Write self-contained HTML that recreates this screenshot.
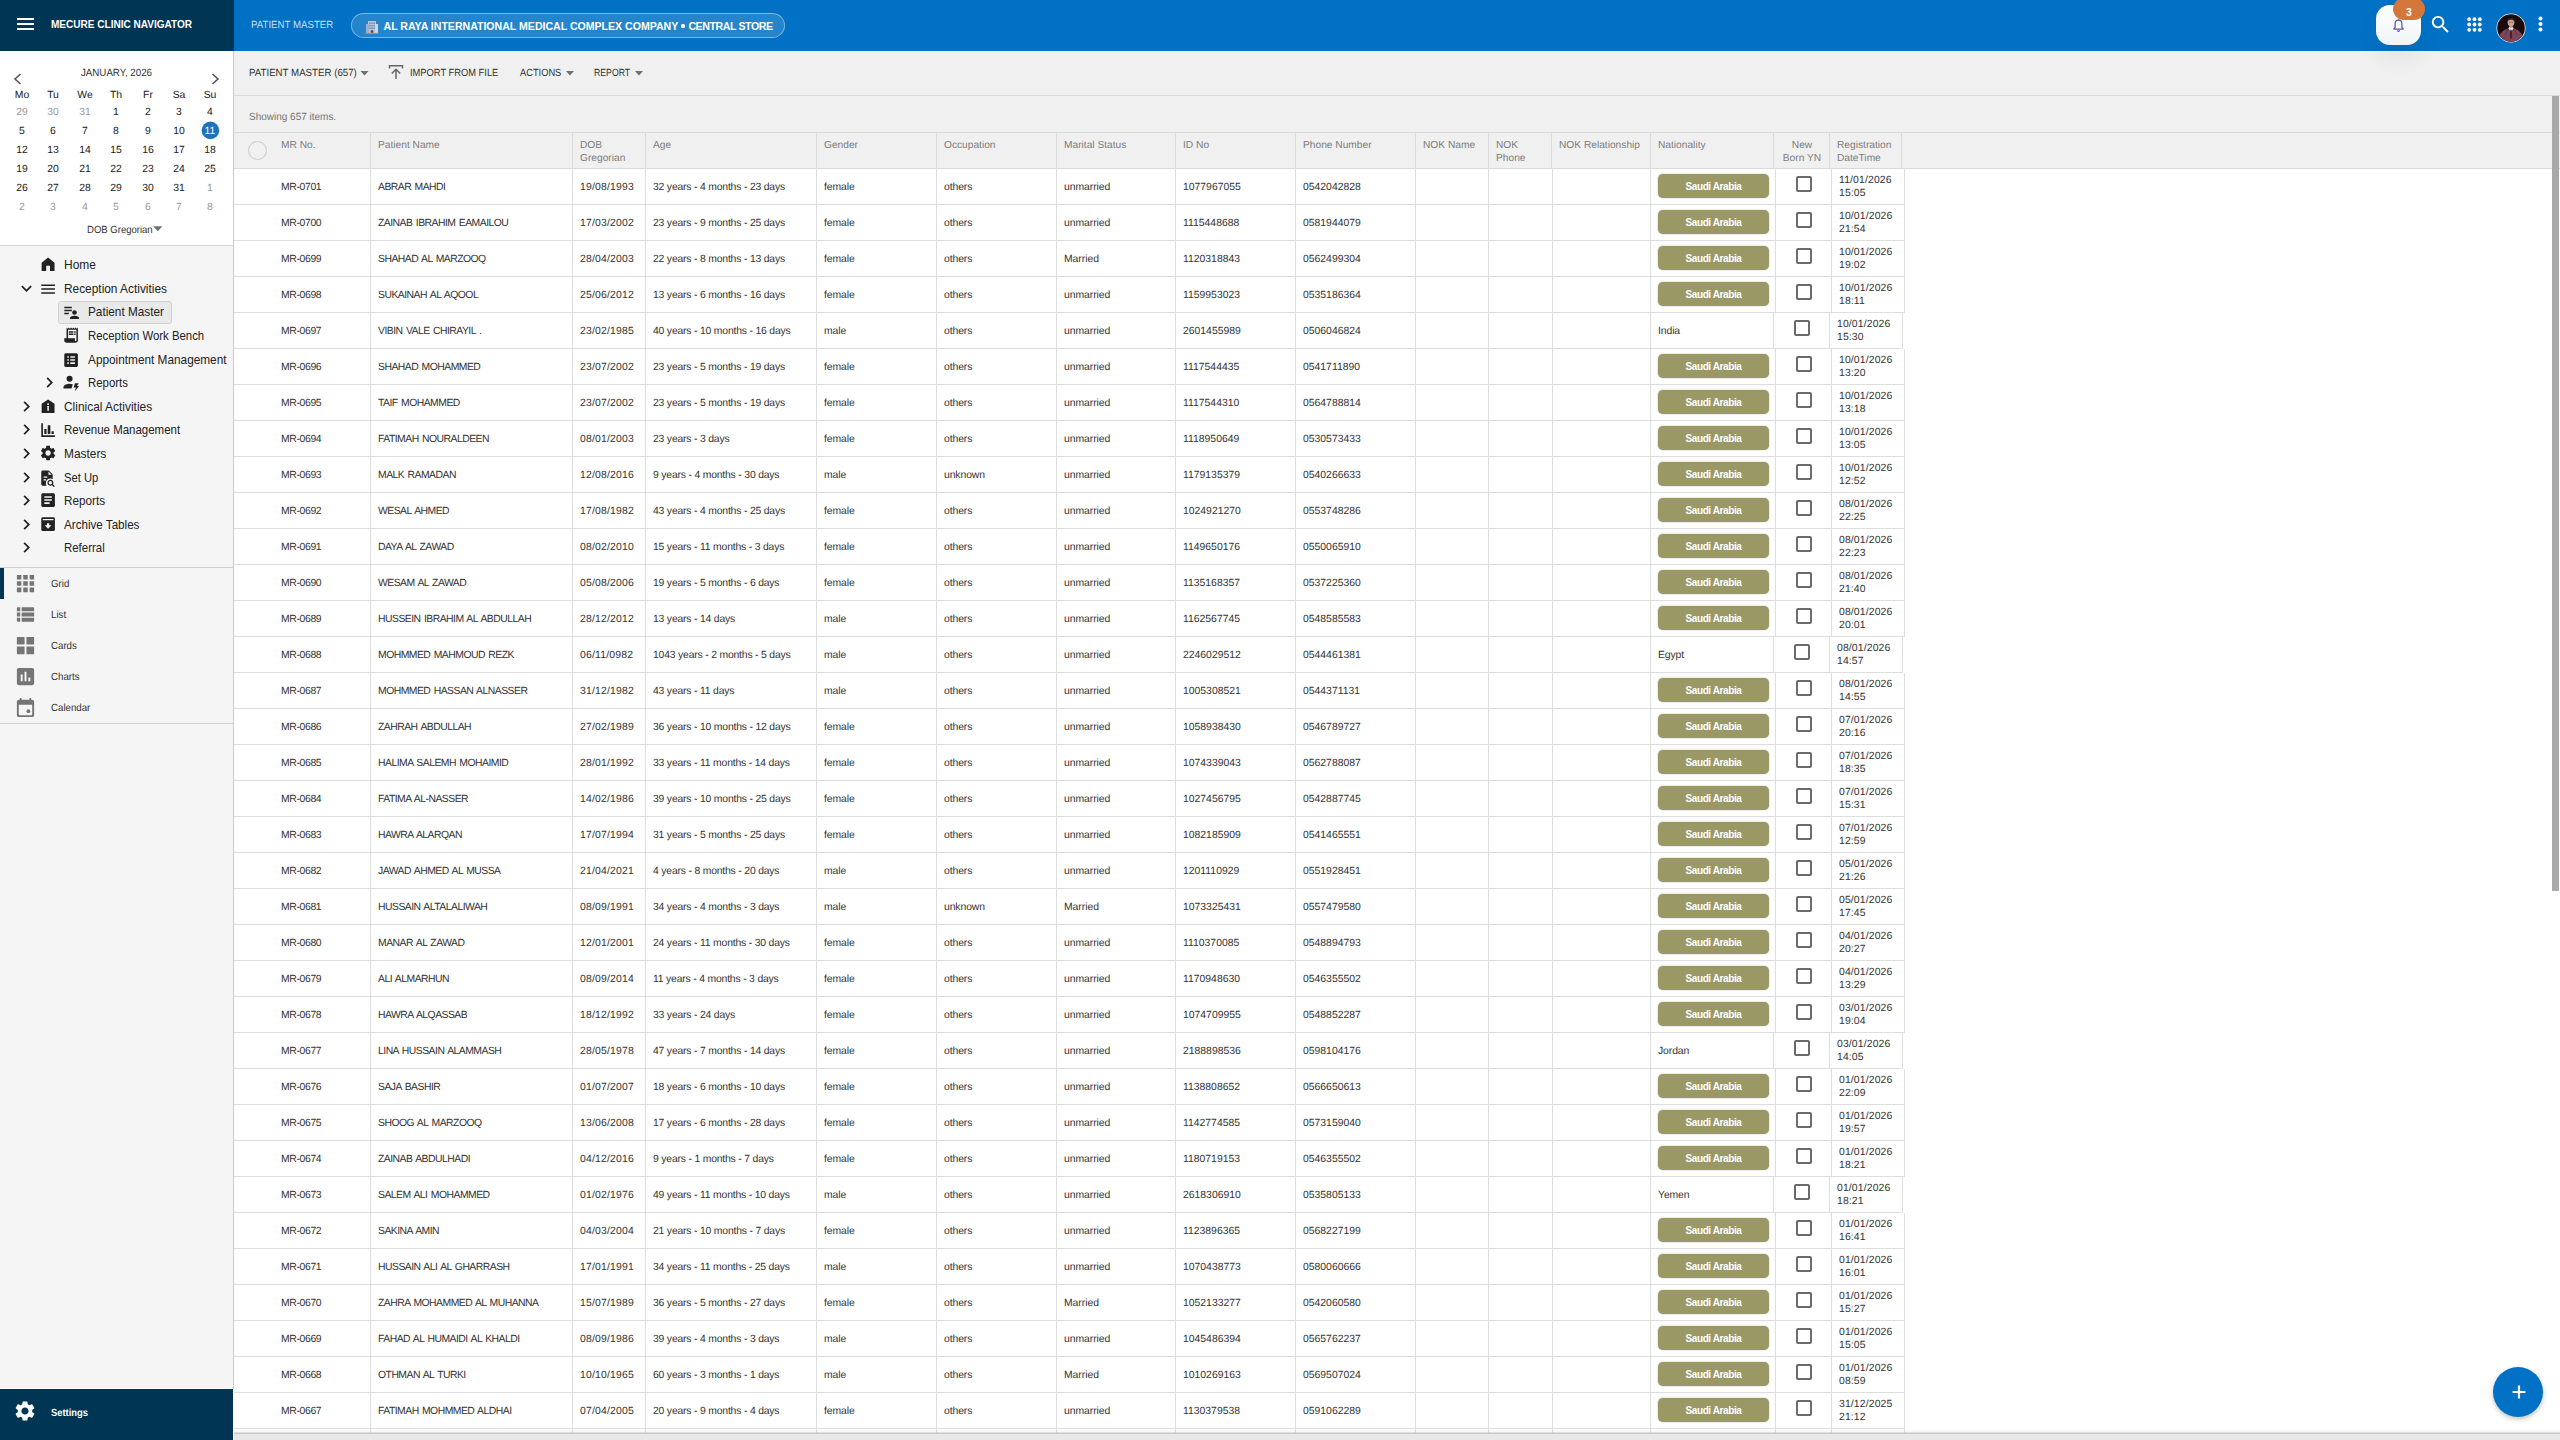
<!DOCTYPE html>
<html lang="en"><head><meta charset="utf-8"><title>Patient Master</title>
<style>
html,body{margin:0;padding:0}
body{width:2560px;height:1440px;overflow:hidden;background:#fff;font-family:"Liberation Sans",sans-serif;font-size:10.4px;color:#333;position:relative}
*,*:before,*:after{box-sizing:border-box}
i{font-style:normal}
svg{display:block}
.abs{position:absolute}
/* ---------- top bar ---------- */
#tdark{position:absolute;left:0;top:0;width:234px;height:51px;background:#003554}
#tblue{position:absolute;left:234px;top:0;width:2326px;height:51px;background:#0071c5}
#burger{position:absolute;left:17px;top:18px;width:17px;height:12px}
#burger b{position:absolute;left:0;width:17px;height:2px;background:#fff}
#brand{position:absolute;left:50.5px;top:14px;height:20px;line-height:20px;font-size:11.2px;font-weight:bold;color:#fff;white-space:nowrap;transform-origin:0 50%;transform:scaleX(.897)}
#ptitle{position:absolute;left:251px;top:15px;height:20px;line-height:20px;font-size:10.4px;color:rgba(255,255,255,.78);white-space:nowrap;transform-origin:0 50%;transform:matrix(.932,0.0005,0,1,0,0)}
#pill{position:absolute;left:351px;top:13px;width:434px;height:25px;border-radius:13px;border:1px solid rgba(255,255,255,.42);background:rgba(255,255,255,.14)}
#pill .t{position:absolute;left:32px;top:2px;height:20px;line-height:20px;font-size:10.6px;font-weight:bold;color:#fff;white-space:nowrap;letter-spacing:-0.1px}
#pill svg{position:absolute;left:13px;top:6px}
#bell{position:absolute;left:2376px;top:5px;width:45px;height:40px;border-radius:14px;background:linear-gradient(180deg,#ffffff,#f1f5f7);box-shadow:0 14px 22px rgba(0,0,0,.055);z-index:5}
#badge{z-index:6;position:absolute;left:2393px;top:-2px;width:32px;height:22px;border-radius:11px;background:#d4773a;color:#fff;font-size:10.5px;font-weight:bold;line-height:22px;text-align:center;padding-top:2.5px}
/* ---------- sidebar ---------- */
#side{position:absolute;left:0;top:51px;width:233px;height:1389px;background:#f5f5f5}
#sideb{position:absolute;left:233px;top:51px;width:1px;height:1338px;background:#cbcbcb}
#cal{position:absolute;left:0;top:0;width:233px;height:195px;background:#fff;border-bottom:1px solid #d4d4d4}
#cal .mt{position:absolute;left:0;width:233px;top:14px;height:15px;line-height:15px;text-align:center;font-size:10.4px;color:#333;transform:matrix(.937,0.0005,0,1,0,0)}
#cal .dn,#cal .dd{position:absolute;width:32px;height:19px;line-height:19px;text-align:center;font-size:10.4px;color:#222;transform:matrix(1,0.0005,0,1,0,0)}
#cal .o{color:#9a9a9a}
#cal .sel{position:absolute;left:0;top:0}
#cal .dobg{position:absolute;left:86.5px;top:171px;height:15px;line-height:15px;font-size:10.4px;color:#333;white-space:nowrap;transform-origin:0 50%;transform:matrix(.917,0.0005,0,1,0,0)}
.nav{position:absolute;left:0;height:24px;line-height:24px;font-size:12.8px;color:#222;white-space:nowrap}
.nav .tx{position:absolute;top:0;display:inline-block;transform-origin:0 50%;transform:scaleX(.92)}
.nav svg{position:absolute}
#pmbox{position:absolute;left:58px;top:250px;width:114px;height:23px;border:1px solid #d2d2d2;background:#e9e9e9;border-radius:3px}
.sep{position:absolute;left:0;width:233px;height:1px;background:#cfcfcf}
.vw{position:absolute;left:0;width:233px;height:31px}
.vw svg{position:absolute;left:13.5px;top:4px}
.vw span{position:absolute;left:50.5px;top:0;height:31px;line-height:31px;font-size:10.4px;color:#333;white-space:nowrap;transform-origin:0 50%;transform:matrix(.933,0.0005,0,1,0,0)}
#gridsel{position:absolute;left:0;top:517px;width:4px;height:31px;background:#003554}
#settings{position:absolute;left:0;top:1337px;width:233px;height:52px;background:#003554;border-top:1px solid #fff}
#settings span{position:absolute;left:50.5px;top:14px;height:20px;line-height:20px;color:#fff;font-size:10.4px;font-weight:bold;transform-origin:0 50%;transform:matrix(.9,0.0005,0,1,0,0)}
#settings svg{position:absolute;left:13.4px;top:10.3px}
/* ---------- main ---------- */
#main{position:absolute;left:0;top:0;width:2560px;height:1440px;pointer-events:none}
#tool{position:absolute;left:234px;top:51px;width:2326px;height:45px;background:#f0f0f0;border-bottom:1px solid #d9d9d9}
.tb{position:absolute;top:63px;height:20px;line-height:20px;font-size:10.4px;color:#333;white-space:nowrap;transform-origin:0 50%}
.tri{position:absolute;width:9px;height:5px;background:#707070;clip-path:polygon(0 0,100% 0,50% 100%)}
#showing{position:absolute;left:234px;top:96px;width:2326px;height:36px;background:#f0f0f0}
#showing span{position:absolute;left:14.5px;top:11px;height:20px;line-height:20px;font-size:10.4px;color:#757575;white-space:nowrap;transform-origin:0 50%;transform:matrix(.961,0.0005,0,1,0,0)}
#thead{position:absolute;left:0;top:132px;width:2560px;height:37px}
#thead:before{content:"";position:absolute;left:234px;top:0;width:2326px;height:37px;background:#f0f0f0;border-top:1px solid #dadada;border-bottom:1px solid #dadada}
.th{position:absolute;top:6px;line-height:13px;font-size:10.2px;color:#7d7d7d;white-space:nowrap;transform-origin:0 0;transform:matrix(1,0.0005,0,1,0,0)}
.thc{text-align:center;transform-origin:50% 0}
.selc{position:absolute;left:248px;top:9px;width:19px;height:19px;border-radius:50%;border:1px solid #c9c9c9}
.vl{position:absolute;top:1px;width:1px;height:36px;background:#dcdcdc}
#tbody{position:absolute;left:0;top:0;width:2560px;height:1433px;overflow:hidden}
#tbody .vl{top:169px;height:1264px;background:#dedede}
.tr{position:absolute;left:234px;width:1669px;height:36px;border-bottom:1px solid #dedede}
.tr.sa{width:1671px}
.c{position:absolute;top:0;height:35px;line-height:35px;white-space:nowrap;color:#333;transform-origin:0 50%;transform:matrix(1,0.0005,0,1,0,0)}
.mr{left:47px;letter-spacing:-0.36px}
.nm{left:143.7px;letter-spacing:-0.52px;word-spacing:1px}
.dob{left:346px;letter-spacing:0.2px}
.age{left:419px;letter-spacing:-0.19px}
.gen{left:590px;letter-spacing:-0.1px}
.occ{left:710px;letter-spacing:-0.1px}
.mar{left:830px;letter-spacing:-0.05px}
.idn{left:949px}
.ph{left:1069px}
.nat{left:1424px;letter-spacing:-0.1px}
.reg{left:1603px;top:4px;line-height:13px;height:26px;letter-spacing:0.14px;transform-origin:0 0}
.sa .reg{left:1605px}
.badge{position:absolute;left:1424px;top:5px;width:111px;height:24px;border-radius:5px;background:#9a9965;color:#fff;font-weight:bold;font-size:10px;line-height:24px;padding-top:1px;text-align:center;letter-spacing:-0.4px;box-shadow:0 0 1.5px rgba(0,0,0,.4)}
.cb{position:absolute;left:1559.5px;top:7px;width:16px;height:16px;border:2px solid #6b6b6b;border-radius:2px;background:#fff}
.sa .cb{left:1562px}
.v{position:absolute;top:0;width:1px;height:36px;background:#dedede}
.v.a{left:1539px}.v.b{left:1595px}.v.d{left:1668px}
.sa .v.a{left:1541px}.sa .v.b{left:1597px}.sa .v.d{left:1670px}
.tr.last{border-bottom:0}
#vscroll{position:absolute;left:2552px;top:96px;width:7px;height:795px;background:#a9a9a9}
#hbar{position:absolute;left:234px;top:1429px;width:2326px;height:11px;background:linear-gradient(180deg,rgba(255,255,255,0) 0,rgba(0,0,0,.04) 3px,#c9c9c9 4px,#c9c9c9 5px,#e8e8e8 5px,#e8e8e8 11px)}
#fab{position:absolute;left:2493px;top:1367px;width:50px;height:50px;border-radius:50%;background:#0071c5;box-shadow:0 2px 5px rgba(0,0,0,.25)}
#fab svg{position:absolute;left:14.5px;top:13.5px}

</style></head>
<body>
<div id="tdark">
<div id="burger"><b style="top:0"></b><b style="top:5px"></b><b style="top:10px"></b></div>
<div id="brand">MECURE CLINIC NAVIGATOR</div>
</div>
<div id="tblue">
</div>
<div id="ptitle">PATIENT MASTER</div>
<div id="pill">
<svg width="14" height="14" viewBox="0 0 14 14"><rect x="3" y="1" width="8" height="12" fill="#b8c4d6"/><rect x="1" y="4" width="3" height="9" fill="#9fb0c8"/><rect x="10" y="4" width="3" height="9" fill="#cfd8e6"/><g fill="#5f86c2"><rect x="4.2" y="2.5" width="1.4" height="1.4"/><rect x="6.3" y="2.5" width="1.4" height="1.4"/><rect x="8.4" y="2.5" width="1.4" height="1.4"/><rect x="4.2" y="5" width="1.4" height="1.4"/><rect x="6.3" y="5" width="1.4" height="1.4"/><rect x="8.4" y="5" width="1.4" height="1.4"/><rect x="4.2" y="7.5" width="1.4" height="1.4"/><rect x="6.3" y="7.5" width="1.4" height="1.4"/><rect x="8.4" y="7.5" width="1.4" height="1.4"/></g><rect x="5.8" y="10.3" width="2.4" height="2.7" fill="#4a3f6b"/><rect x="0.5" y="12.6" width="13" height="1" fill="#c9a27a"/></svg>
<span class="t" style="left:31.500px;letter-spacing:-0.02px">AL RAYA INTERNATIONAL MEDICAL COMPLEX COMPANY</span><i style="position:absolute;left:329px;top:10.200px;width:4px;height:4px;border-radius:1.500px;background:#fff"></i><span class="t" style="left:336.400px;letter-spacing:-0.42px">CENTRAL STORE</span>
</div>
<div id="bell"><svg style="position:absolute;left:16px;top:13.500px" width="13" height="14" viewBox="0 0 13 14"><path d="M6.5 1.2 C4.3 1.2 3.1 2.9 3.1 5 V8.4 L1.8 10 H11.2 L9.9 8.4 V5 C9.9 2.9 8.7 1.2 6.5 1.2 Z" fill="none" stroke="#5a59b0" stroke-width="1.250" stroke-linejoin="round"/><path d="M5.5 11.3 a1 1 0 0 0 2 0" fill="none" stroke="#5a59b0" stroke-width="1.250"/><circle cx="6.5" cy="0.9" r="0.7" fill="#5a59b0"/></svg></div>
<div id="badge">3</div>
<svg class="abs" style="left:2428.900px;top:12.850px" width="23" height="23" viewBox="0 0 24 24"><path fill="#fff" d="M15.5 14h-.79l-.28-.27C15.41 12.59 16 11.11 16 9.5 16 5.91 13.09 3 9.5 3S3 5.910 3 9.500 5.910 16 9.500 16c1.610 0 3.090-.59 4.230-1.570l.27.28v.79l5 4.990L20.490 19l-4.990-5zm-6 0C7.010 14 5 11.990 5 9.500S7.010 5 9.500 5 14 7.010 14 9.500 11.990 14 9.500 14z"/></svg>
<svg class="abs" style="left:2466px;top:16px" width="17" height="17" viewBox="0 0 17 17"><g fill="#fff"><circle cx="3.2" cy="3.2" r="1.9"/><circle cx="8.5" cy="3.2" r="1.9"/><circle cx="13.8" cy="3.2" r="1.9"/><circle cx="3.2" cy="8.5" r="1.9"/><circle cx="8.5" cy="8.5" r="1.9"/><circle cx="13.8" cy="8.5" r="1.9"/><circle cx="3.2" cy="13.8" r="1.9"/><circle cx="8.5" cy="13.8" r="1.9"/><circle cx="13.8" cy="13.8" r="1.9"/></g></svg>
<svg class="abs" style="left:2496px;top:12.500px" width="30" height="30" viewBox="0 0 30 30"><defs><clipPath id="avc"><circle cx="15" cy="15" r="13.800"/></clipPath></defs><circle cx="15" cy="15" r="14.600" fill="#eadfe4"/><circle cx="15" cy="15" r="13.800" fill="#1c0b0d"/><g clip-path="url(#avc)"><path d="M2 30C2 21 7 17 11.500 15.500L15 19l3.500-3.500C23 17 28 21 28 30z" fill="#7d4459"/><path d="M9 22l2.500-5.500M21 22l-2.500-5.500" stroke="#5d2f42" stroke-width=".8" fill="none"/><path d="M12.300 15.200L15 19.500l2.700-4.300-1.200-1.700h-3z" fill="#e6e2e8"/><path d="M14.300 16.800h1.400l.5 7.200L15 26.500 13.800 24z" fill="#3a2530"/><rect x="13.600" y="11.500" width="2.800" height="3.200" fill="#b98d80"/><ellipse cx="15" cy="9.300" rx="3.400" ry="4.100" fill="#c9a193"/><path d="M11.500 8.800C10.800 3.300 19.200 3.300 18.500 8.800 17.500 6.200 12.500 6.200 11.500 8.800z" fill="#2b1d1d"/><path d="M12.600 9.300h2M15.400 9.300h2" stroke="#5a4038" stroke-width=".5"/></g></svg>
<svg class="abs" style="left:2538px;top:16px" width="5" height="16" viewBox="0 0 5 16"><g fill="#fff"><circle cx="2.500" cy="2.500" r="2"/><circle cx="2.500" cy="8" r="2"/><circle cx="2.500" cy="13.500" r="2"/></g></svg>
<div id="side">
<div id="cal">
<div class="mt">JANUARY, 2026</div>
<svg class="abs" style="left:13px;top:22px" width="9" height="12" viewBox="0 0 9 12"><path d="M7.5 1 L2 6 L7.5 11" fill="none" stroke="#555" stroke-width="1.6"/></svg>
<svg class="abs" style="left:211px;top:22px" width="9" height="12" viewBox="0 0 9 12"><path d="M1.5 1 L7 6 L1.5 11" fill="none" stroke="#555" stroke-width="1.6"/></svg>
<span class="dn" style="left:5.8px;top:34px">Mo</span><span class="dn" style="left:37.2px;top:34px">Tu</span><span class="dn" style="left:68.7px;top:34px">We</span><span class="dn" style="left:100.1px;top:34px">Th</span><span class="dn" style="left:131.5px;top:34px">Fr</span><span class="dn" style="left:163.0px;top:34px">Sa</span><span class="dn" style="left:194.4px;top:34px">Su</span>
<svg class="sel" width="233" height="100" viewBox="0 0 233 100"><circle cx="210.400" cy="79.400" r="8.800" fill="#1e73be"/></svg>
<span class="dd o" style="left:5.8px;top:51px">29</span><span class="dd o" style="left:37.2px;top:51px">30</span><span class="dd o" style="left:68.7px;top:51px">31</span><span class="dd" style="left:100.1px;top:51px">1</span><span class="dd" style="left:131.5px;top:51px">2</span><span class="dd" style="left:163.0px;top:51px">3</span><span class="dd" style="left:194.4px;top:51px">4</span>
<span class="dd" style="left:5.8px;top:70px">5</span><span class="dd" style="left:37.2px;top:70px">6</span><span class="dd" style="left:68.7px;top:70px">7</span><span class="dd" style="left:100.1px;top:70px">8</span><span class="dd" style="left:131.5px;top:70px">9</span><span class="dd" style="left:163.0px;top:70px">10</span><span class="dd" style="left:194.4px;top:70px;color:#fff">11</span>
<span class="dd" style="left:5.8px;top:89px">12</span><span class="dd" style="left:37.2px;top:89px">13</span><span class="dd" style="left:68.7px;top:89px">14</span><span class="dd" style="left:100.1px;top:89px">15</span><span class="dd" style="left:131.5px;top:89px">16</span><span class="dd" style="left:163.0px;top:89px">17</span><span class="dd" style="left:194.4px;top:89px">18</span>
<span class="dd" style="left:5.8px;top:108px">19</span><span class="dd" style="left:37.2px;top:108px">20</span><span class="dd" style="left:68.7px;top:108px">21</span><span class="dd" style="left:100.1px;top:108px">22</span><span class="dd" style="left:131.5px;top:108px">23</span><span class="dd" style="left:163.0px;top:108px">24</span><span class="dd" style="left:194.4px;top:108px">25</span>
<span class="dd" style="left:5.8px;top:127px">26</span><span class="dd" style="left:37.2px;top:127px">27</span><span class="dd" style="left:68.7px;top:127px">28</span><span class="dd" style="left:100.1px;top:127px">29</span><span class="dd" style="left:131.5px;top:127px">30</span><span class="dd" style="left:163.0px;top:127px">31</span><span class="dd o" style="left:194.4px;top:127px">1</span>
<span class="dd o" style="left:5.8px;top:146px">2</span><span class="dd o" style="left:37.2px;top:146px">3</span><span class="dd o" style="left:68.7px;top:146px">4</span><span class="dd o" style="left:100.1px;top:146px">5</span><span class="dd o" style="left:131.5px;top:146px">6</span><span class="dd o" style="left:163.0px;top:146px">7</span><span class="dd o" style="left:194.4px;top:146px">8</span>
<span class="dobg">DOB Gregorian</span><i class="tri" style="left:153.300px;top:175.200px"></i>
</div>
<div id="pmbox"></div>
<div class="nav" style="top:201.6px"><svg style="left:38.9px;top:2.9px" width="18.2" height="18.2" viewBox="0 0 24 24" fill="#222"><path d="M12 3.200 3.500 10.200V21h6v-6.800h5V21h6V10.200z"/></svg><span class="tx" style="left:64.2px;transform:scaleX(0.934)">Home</span></div>
<div class="nav" style="top:225.7px"><svg style="left:15.8px;top:1.5px" width="21.0" height="21.0" viewBox="0 0 24 24" fill="#222"><path d="M16.590 8.590L12 13.170 7.410 8.590 6 10l6 6 6-6z"/></svg><svg style="left:38.9px;top:2.9px" width="18.2" height="18.2" viewBox="0 0 24 24" fill="#222"><path d="M3 18h18v-2H3v2zm0-5h18v-2H3v2zm0-7v2h18V6H3z"/></svg><span class="tx" style="left:64.2px;transform:scaleX(0.928)">Reception Activities</span></div>
<div class="nav" style="top:248.8px"><svg style="left:62.4px;top:2.9px" width="18.2" height="18.2" viewBox="0 0 24 24" fill="#222"><path d="M3 5h10v2H3zM3 9h10v2H3zM3 13h6v2H3z"/><circle cx="16.5" cy="12.500" r="3"/><path d="M10.500 21v-1.200c0-2 4-3.100 6-3.100s6 1.100 6 3.100V21z"/></svg><span class="tx" style="left:87.6px;transform:scaleX(0.920)">Patient Master</span></div>
<div class="nav" style="top:272.6px"><svg style="left:62.4px;top:2.9px" width="18.2" height="18.2" viewBox="0 0 24 24" fill="#222"><path d="M19.500 3.500L18 2l-1.500 1.500L15 2l-1.500 1.500L12 2l-1.500 1.500L9 2 7.500 3.500 6 2v14H3v3c0 1.660 1.340 3 3 3h12c1.660 0 3-1.340 3-3V2l-1.500 1.500zM19 19c0 .55-.45 1-1 1s-1-.45-1-1v-3H8V5h11v14z"/><path d="M9 7h6v2H9zM16 7h2v2h-2zM9 10h6v2H9zM16 10h2v2h-2z"/></svg><span class="tx" style="left:87.6px;transform:scaleX(0.889)">Reception Work Bench</span></div>
<div class="nav" style="top:296.7px"><svg style="left:62.4px;top:2.9px" width="18.2" height="18.2" viewBox="0 0 24 24" fill="#222"><path d="M19 3H5c-1.100 0-2 .9-2 2v14c0 1.100.9 2 2 2h14c1.100 0 2-.9 2-2V5c0-1.100-.9-2-2-2zM9 17H7v-2h2v2zm0-4H7v-2h2v2zm0-4H7V7h2v2zm8 8h-6v-2h6v2zm0-4h-6v-2h6v2zm0-4h-6V7h6v2z"/></svg><span class="tx" style="left:87.6px;transform:scaleX(0.923)">Appointment Management</span></div>
<div class="nav" style="top:319.6px"><svg style="left:38.8px;top:1.5px" width="21.0" height="21.0" viewBox="0 0 24 24" fill="#222"><path d="M10 6L8.590 7.410 13.170 12l-4.580 4.590L10 18l6-6z"/></svg><svg style="left:62.4px;top:2.9px" width="18.2" height="18.2" viewBox="0 0 24 24" fill="#222"><circle cx="10" cy="7.500" r="4"/><path d="M2 20.500v-2.200c0-2.800 5.300-4.200 8-4.200 1.200 0 2.800.3 4.300.8l-1.800 5.600z"/><path d="M17 13.500h5l-2.200 3.800h2.700l-5.500 6.700 1.300-5h-2.800z"/></svg><span class="tx" style="left:87.6px;transform:scaleX(0.890)">Reports</span></div>
<div class="nav" style="top:343.6px"><svg style="left:15.8px;top:1.5px" width="21.0" height="21.0" viewBox="0 0 24 24" fill="#222"><path d="M10 6L8.590 7.410 13.170 12l-4.580 4.590L10 18l6-6z"/></svg><svg style="left:38.9px;top:2.9px" width="18.2" height="18.2" viewBox="0 0 24 24" fill="#222"><path d="M12 3.200 3.500 8.800V21h17V8.800z"/><path fill="#f5f5f5" d="M11 8.300h2v2.200h-2zM11 12h2v6h-2z"/></svg><span class="tx" style="left:64.2px;transform:scaleX(0.932)">Clinical Activities</span></div>
<div class="nav" style="top:366.8px"><svg style="left:15.8px;top:1.5px" width="21.0" height="21.0" viewBox="0 0 24 24" fill="#222"><path d="M10 6L8.590 7.410 13.170 12l-4.580 4.590L10 18l6-6z"/></svg><svg style="left:38.9px;top:2.9px" width="18.2" height="18.2" viewBox="0 0 24 24" fill="#222"><path d="M3 3h2.200v15.800H21V21H3z"/><path d="M7 10.500h3V17H7zM11.500 5.500h3.500V17h-3.500zM16.500 13.500h3V17h-3z"/></svg><span class="tx" style="left:64.2px;transform:scaleX(0.897)">Revenue Management</span></div>
<div class="nav" style="top:390.6px"><svg style="left:15.8px;top:1.5px" width="21.0" height="21.0" viewBox="0 0 24 24" fill="#222"><path d="M10 6L8.590 7.410 13.170 12l-4.580 4.590L10 18l6-6z"/></svg><svg style="left:38.9px;top:2.9px" width="18.2" height="18.2" viewBox="0 0 24 24" fill="#222"><path d="M19.140 12.940c.04-.3.06-.61.06-.94 0-.32-.02-.64-.07-.94l2.030-1.580c.18-.14.23-.41.12-.61l-1.920-3.320c-.12-.22-.37-.29-.59-.22l-2.390.96c-.5-.38-1.030-.7-1.620-.94l-.36-2.540c-.04-.24-.24-.41-.48-.41h-3.840c-.24 0-.43.17-.47.41l-.36 2.540c-.59.24-1.130.57-1.620.94l-2.390-.96c-.22-.08-.47 0-.59.22L2.740 8.870c-.12.210-.08.470.12.610l2.030 1.580c-.05.3-.09.63-.09.940s.02.640.07.940l-2.030 1.580c-.18.140-.23.410-.12.610l1.920 3.320c.12.220.37.290.59.220l2.390-.96c.5.380 1.030.7 1.620.94l.36 2.540c.05.240.24.410.48.410h3.840c.24 0 .44-.17.470-.41l.36-2.540c.59-.24 1.130-.56 1.620-.94l2.390.96c.22.080.47 0 .59-.22l1.920-3.320c.12-.22.07-.47-.12-.61l-2.010-1.580zM12 15.600c-1.980 0-3.600-1.620-3.600-3.600s1.620-3.600 3.600-3.600 3.600 1.620 3.600 3.600-1.620 3.600-3.600 3.600z"/></svg><span class="tx" style="left:64.2px;transform:scaleX(0.930)">Masters</span></div>
<div class="nav" style="top:414.7px"><svg style="left:15.8px;top:1.5px" width="21.0" height="21.0" viewBox="0 0 24 24" fill="#222"><path d="M10 6L8.590 7.410 13.170 12l-4.580 4.590L10 18l6-6z"/></svg><svg style="left:38.9px;top:2.9px" width="18.2" height="18.2" viewBox="0 0 24 24" fill="#222"><path d="M5 2h8l5 5v6.300c-.9-.5-1.900-.8-3-.8-3.300 0-6 2.700-6 6 0 1.300.4 2.500 1.100 3.500H5c-1.100 0-2-.9-2-2V4c0-1.100.9-2 2-2z"/><path fill="#f5f5f5" d="M12.500 3.200V7.500h4.300zM6 10h5v1.600H6zM6 13.500h3.500v1.600H6z"/><path d="M15 14.200a3.900 3.900 0 1 0 2.100 7.200l2.500 2.500 1.300-1.300-2.500-2.500A3.900 3.900 0 0 0 15 14.200zm0 1.700a2.200 2.200 0 1 1 0 4.400 2.200 2.200 0 0 1 0-4.400z"/></svg><span class="tx" style="left:64.2px;transform:scaleX(0.878)">Set Up</span></div>
<div class="nav" style="top:437.6px"><svg style="left:15.8px;top:1.5px" width="21.0" height="21.0" viewBox="0 0 24 24" fill="#222"><path d="M10 6L8.590 7.410 13.170 12l-4.580 4.590L10 18l6-6z"/></svg><svg style="left:38.9px;top:2.9px" width="18.2" height="18.2" viewBox="0 0 24 24" fill="#222"><path d="M19 3H5c-1.100 0-2 .9-2 2v14c0 1.100.9 2 2 2h14c1.100 0 2-.9 2-2V5c0-1.100-.9-2-2-2zm-5 14H7v-2h7v2zm3-4H7v-2h10v2zm0-4H7V7h10v2z"/></svg><span class="tx" style="left:64.2px;transform:scaleX(0.915)">Reports</span></div>
<div class="nav" style="top:461.6px"><svg style="left:15.8px;top:1.5px" width="21.0" height="21.0" viewBox="0 0 24 24" fill="#222"><path d="M10 6L8.590 7.410 13.170 12l-4.580 4.590L10 18l6-6z"/></svg><svg style="left:38.9px;top:2.9px" width="18.2" height="18.2" viewBox="0 0 24 24" fill="#222"><path d="M5 3h14c1.100 0 2 .9 2 2v14c0 1.100-.9 2-2 2H5c-1.100 0-2-.9-2-2V5c0-1.100.9-2 2-2z"/><path fill="#f5f5f5" d="M5 5.200h14v1.600H5zM12 18l-4.500-4.500H10.500v-2.500h3v2.500h3z"/></svg><span class="tx" style="left:64.2px;transform:scaleX(0.909)">Archive Tables</span></div>
<div class="nav" style="top:484.7px"><svg style="left:15.8px;top:1.5px" width="21.0" height="21.0" viewBox="0 0 24 24" fill="#222"><path d="M10 6L8.590 7.410 13.170 12l-4.580 4.590L10 18l6-6z"/></svg><span class="tx" style="left:64.2px;transform:scaleX(0.894)">Referral</span></div>
<div class="sep" style="top:516px"></div>
<div id="gridsel"></div>
<div class="vw" style="top:516.5px"><svg width="23" height="23" viewBox="0 0 24 24" fill="#757575"><path d="M3 3h4.700v4.700H3zM9.650 3h4.700v4.700H9.650zM16.300 3H21v4.700h-4.700zM3 9.650h4.700v4.700H3zM9.650 9.650h4.700v4.700H9.650zM16.300 9.650H21v4.700h-4.700zM3 16.300h4.700V21H3zM9.650 16.300h4.700V21H9.650zM16.300 16.300H21V21h-4.700z"/></svg><span>Grid</span></div>
<div class="vw" style="top:547.5px"><svg width="23" height="23" viewBox="0 0 24 24" fill="#757575"><path d="M3 5.500c0-.55.45-1 1-1h2.500v4H3zM3 10h3.500v4H3zM3 15.500h3.500v4H4c-.55 0-1-.45-1-1zM8 4.500h12c.55 0 1 .45 1 1v3H8zM8 10h13v4H8zM8 15.500h13v3c0 .55-.45 1-1 1H8z"/></svg><span>List</span></div>
<div class="vw" style="top:578.5px"><svg width="23" height="23" viewBox="0 0 24 24" fill="#757575"><path d="M3 3h8v8H3zM13 3h8v8h-8zM3 13h8v8H3zM13 13h8v8h-8z"/></svg><span>Cards</span></div>
<div class="vw" style="top:609.5px"><svg width="23" height="23" viewBox="0 0 24 24" fill="#757575"><path d="M19 3H5c-1.100 0-2 .9-2 2v14c0 1.100.9 2 2 2h14c1.100 0 2-.9 2-2V5c0-1.100-.9-2-2-2zM9 17H7v-7h2v7zm4 0h-2V7h2v10zm4 0h-2v-4h2v4z"/></svg><span>Charts</span></div>
<div class="vw" style="top:640.5px"><svg width="23" height="23" viewBox="0 0 24 24" fill="#757575"><circle cx="15" cy="15.800" r="2"/><path d="M16 3v1H8V3c0-.55-.45-1-1-1s-1 .45-1 1v1H5c-1.110 0-1.990.9-1.990 2L3 20c0 1.100.89 2 2 2h14c1.100 0 2-.9 2-2V6c0-1.100-.9-2-2-2h-1V3c0-.55-.45-1-1-1s-1 .45-1 1zm2 17H6c-.55 0-1-.45-1-1V9h14v10c0 .55-.45 1-1 1z"/></svg><span>Calendar</span></div>
<div class="sep" style="top:672px"></div>
<div id="settings"><svg width="24" height="24" viewBox="0 0 24 24" fill="#fff"><path d="M19.140 12.940c.04-.3.06-.61.06-.94 0-.32-.02-.64-.07-.94l2.030-1.580c.18-.14.23-.41.12-.61l-1.920-3.320c-.12-.22-.37-.29-.59-.22l-2.390.96c-.5-.38-1.030-.7-1.620-.94l-.36-2.540c-.04-.24-.24-.41-.48-.41h-3.840c-.24 0-.43.17-.47.41l-.36 2.540c-.59.24-1.130.57-1.620.94l-2.390-.96c-.22-.08-.47 0-.59.22L2.740 8.870c-.12.210-.08.470.12.610l2.030 1.580c-.05.3-.09.63-.09.940s.02.640.07.940l-2.030 1.580c-.18.140-.23.410-.12.610l1.920 3.320c.12.220.37.290.59.220l2.390-.96c.5.380 1.030.7 1.620.94l.36 2.540c.05.240.24.410.48.410h3.840c.24 0 .44-.17.470-.41l.36-2.540c.59-.24 1.130-.56 1.620-.94l2.390.96c.22.080.47 0 .59-.22l1.920-3.320c.12-.22.07-.47-.12-.61l-2.010-1.580zM12 15.600c-1.980 0-3.600-1.620-3.600-3.600s1.620-3.600 3.600-3.600 3.600 1.620 3.600 3.600-1.620 3.600-3.600 3.600z"/></svg><span>Settings</span></div>
</div>
<div id="sideb"></div>
<div id="main">
<div id="tool"></div>
<span class="tb" style="left:248.500px;transform:matrix(.934,0.0005,0,1,0,0)">PATIENT MASTER (657)</span><i class="tri" style="left:360px;top:70.5px"></i>
<svg class="abs" style="left:388px;top:64px" width="16" height="16" viewBox="0 0 16 16" fill="none" stroke="#666" stroke-width="1.500"><path d="M1.500 4.500V1.800H14.500V4.500"/><path d="M8 15V5.500M3.800 9.500L8 5.300L12.200 9.500"/></svg>
<span class="tb" style="left:410.300px;transform:matrix(.898,0.0005,0,1,0,0)">IMPORT FROM FILE</span>
<span class="tb" style="left:520px;transform:matrix(.894,0.0005,0,1,0,0)">ACTIONS</span><i class="tri" style="left:565.500px;top:70.5px"></i>
<span class="tb" style="left:593.600px;transform:matrix(.839,0.0005,0,1,0,0)">REPORT</span><i class="tri" style="left:634.500px;top:70.5px"></i>
<div id="showing"><span>Showing 657 items.</span></div>
<div id="thead">
<span class="selc"></span>
<span class="th" style="left:281px">MR No.</span>
<span class="th" style="left:378px">Patient Name</span>
<span class="th" style="left:580px">DOB<br>Gregorian</span>
<span class="th" style="left:653px">Age</span>
<span class="th" style="left:824px">Gender</span>
<span class="th" style="left:944px">Occupation</span>
<span class="th" style="left:1064px">Marital Status</span>
<span class="th" style="left:1183px">ID No</span>
<span class="th" style="left:1303px">Phone Number</span>
<span class="th" style="left:1423px">NOK Name</span>
<span class="th" style="left:1496px">NOK<br>Phone</span>
<span class="th" style="left:1559px">NOK Relationship</span>
<span class="th" style="left:1658px">Nationality</span>
<span class="th thc" style="left:1774px;width:56px">New<br>Born YN</span>
<span class="th" style="left:1837px">Registration<br>DateTime</span>
<i class="vl" style="left:370px"></i><i class="vl" style="left:572px"></i><i class="vl" style="left:645px"></i><i class="vl" style="left:816px"></i><i class="vl" style="left:936px"></i><i class="vl" style="left:1056px"></i><i class="vl" style="left:1175px"></i><i class="vl" style="left:1295px"></i><i class="vl" style="left:1415px"></i><i class="vl" style="left:1488px"></i><i class="vl" style="left:1551px"></i><i class="vl" style="left:1650px"></i><i class="vl" style="left:1773px"></i><i class="vl" style="left:1829px"></i><i class="vl" style="left:1901px"></i>
</div>
<div id="tbody">
<div class="tr sa" style="top:169px"><span class="c mr">MR-0701</span><span class="c nm">ABRAR MAHDI</span><span class="c dob">19/08/1993</span><span class="c age">32 years - 4 months - 23 days</span><span class="c gen">female</span><span class="c occ">others</span><span class="c mar">unmarried</span><span class="c idn">1077967055</span><span class="c ph">0542042828</span><span class="badge">Saudi Arabia</span><span class="cb"></span><span class="c reg">11/01/2026<br>15:05</span><i class="v a"></i><i class="v b"></i><i class="v d"></i></div>
<div class="tr sa" style="top:205px"><span class="c mr">MR-0700</span><span class="c nm">ZAINAB IBRAHIM EAMAILOU</span><span class="c dob">17/03/2002</span><span class="c age">23 years - 9 months - 25 days</span><span class="c gen">female</span><span class="c occ">others</span><span class="c mar">unmarried</span><span class="c idn">1115448688</span><span class="c ph">0581944079</span><span class="badge">Saudi Arabia</span><span class="cb"></span><span class="c reg">10/01/2026<br>21:54</span><i class="v a"></i><i class="v b"></i><i class="v d"></i></div>
<div class="tr sa" style="top:241px"><span class="c mr">MR-0699</span><span class="c nm">SHAHAD AL MARZOOQ</span><span class="c dob">28/04/2003</span><span class="c age">22 years - 8 months - 13 days</span><span class="c gen">female</span><span class="c occ">others</span><span class="c mar">Married</span><span class="c idn">1120318843</span><span class="c ph">0562499304</span><span class="badge">Saudi Arabia</span><span class="cb"></span><span class="c reg">10/01/2026<br>19:02</span><i class="v a"></i><i class="v b"></i><i class="v d"></i></div>
<div class="tr sa" style="top:277px"><span class="c mr">MR-0698</span><span class="c nm">SUKAINAH AL AQOOL</span><span class="c dob">25/06/2012</span><span class="c age">13 years - 6 months - 16 days</span><span class="c gen">female</span><span class="c occ">others</span><span class="c mar">unmarried</span><span class="c idn">1159953023</span><span class="c ph">0535186364</span><span class="badge">Saudi Arabia</span><span class="cb"></span><span class="c reg">10/01/2026<br>18:11</span><i class="v a"></i><i class="v b"></i><i class="v d"></i></div>
<div class="tr" style="top:313px"><span class="c mr">MR-0697</span><span class="c nm">VIBIN VALE CHIRAYIL .</span><span class="c dob">23/02/1985</span><span class="c age">40 years - 10 months - 16 days</span><span class="c gen">male</span><span class="c occ">others</span><span class="c mar">unmarried</span><span class="c idn">2601455989</span><span class="c ph">0506046824</span><span class="c nat">India</span><span class="cb"></span><span class="c reg">10/01/2026<br>15:30</span><i class="v a"></i><i class="v b"></i><i class="v d"></i></div>
<div class="tr sa" style="top:349px"><span class="c mr">MR-0696</span><span class="c nm">SHAHAD MOHAMMED</span><span class="c dob">23/07/2002</span><span class="c age">23 years - 5 months - 19 days</span><span class="c gen">female</span><span class="c occ">others</span><span class="c mar">unmarried</span><span class="c idn">1117544435</span><span class="c ph">0541711890</span><span class="badge">Saudi Arabia</span><span class="cb"></span><span class="c reg">10/01/2026<br>13:20</span><i class="v a"></i><i class="v b"></i><i class="v d"></i></div>
<div class="tr sa" style="top:385px"><span class="c mr">MR-0695</span><span class="c nm">TAIF MOHAMMED</span><span class="c dob">23/07/2002</span><span class="c age">23 years - 5 months - 19 days</span><span class="c gen">female</span><span class="c occ">others</span><span class="c mar">unmarried</span><span class="c idn">1117544310</span><span class="c ph">0564788814</span><span class="badge">Saudi Arabia</span><span class="cb"></span><span class="c reg">10/01/2026<br>13:18</span><i class="v a"></i><i class="v b"></i><i class="v d"></i></div>
<div class="tr sa" style="top:421px"><span class="c mr">MR-0694</span><span class="c nm">FATIMAH NOURALDEEN</span><span class="c dob">08/01/2003</span><span class="c age">23 years - 3 days</span><span class="c gen">female</span><span class="c occ">others</span><span class="c mar">unmarried</span><span class="c idn">1118950649</span><span class="c ph">0530573433</span><span class="badge">Saudi Arabia</span><span class="cb"></span><span class="c reg">10/01/2026<br>13:05</span><i class="v a"></i><i class="v b"></i><i class="v d"></i></div>
<div class="tr sa" style="top:457px"><span class="c mr">MR-0693</span><span class="c nm">MALK RAMADAN</span><span class="c dob">12/08/2016</span><span class="c age">9 years - 4 months - 30 days</span><span class="c gen">male</span><span class="c occ">unknown</span><span class="c mar">unmarried</span><span class="c idn">1179135379</span><span class="c ph">0540266633</span><span class="badge">Saudi Arabia</span><span class="cb"></span><span class="c reg">10/01/2026<br>12:52</span><i class="v a"></i><i class="v b"></i><i class="v d"></i></div>
<div class="tr sa" style="top:493px"><span class="c mr">MR-0692</span><span class="c nm">WESAL AHMED</span><span class="c dob">17/08/1982</span><span class="c age">43 years - 4 months - 25 days</span><span class="c gen">female</span><span class="c occ">others</span><span class="c mar">unmarried</span><span class="c idn">1024921270</span><span class="c ph">0553748286</span><span class="badge">Saudi Arabia</span><span class="cb"></span><span class="c reg">08/01/2026<br>22:25</span><i class="v a"></i><i class="v b"></i><i class="v d"></i></div>
<div class="tr sa" style="top:529px"><span class="c mr">MR-0691</span><span class="c nm">DAYA AL ZAWAD</span><span class="c dob">08/02/2010</span><span class="c age">15 years - 11 months - 3 days</span><span class="c gen">female</span><span class="c occ">others</span><span class="c mar">unmarried</span><span class="c idn">1149650176</span><span class="c ph">0550065910</span><span class="badge">Saudi Arabia</span><span class="cb"></span><span class="c reg">08/01/2026<br>22:23</span><i class="v a"></i><i class="v b"></i><i class="v d"></i></div>
<div class="tr sa" style="top:565px"><span class="c mr">MR-0690</span><span class="c nm">WESAM AL ZAWAD</span><span class="c dob">05/08/2006</span><span class="c age">19 years - 5 months - 6 days</span><span class="c gen">female</span><span class="c occ">others</span><span class="c mar">unmarried</span><span class="c idn">1135168357</span><span class="c ph">0537225360</span><span class="badge">Saudi Arabia</span><span class="cb"></span><span class="c reg">08/01/2026<br>21:40</span><i class="v a"></i><i class="v b"></i><i class="v d"></i></div>
<div class="tr sa" style="top:601px"><span class="c mr">MR-0689</span><span class="c nm">HUSSEIN IBRAHIM AL ABDULLAH</span><span class="c dob">28/12/2012</span><span class="c age">13 years - 14 days</span><span class="c gen">male</span><span class="c occ">others</span><span class="c mar">unmarried</span><span class="c idn">1162567745</span><span class="c ph">0548585583</span><span class="badge">Saudi Arabia</span><span class="cb"></span><span class="c reg">08/01/2026<br>20:01</span><i class="v a"></i><i class="v b"></i><i class="v d"></i></div>
<div class="tr" style="top:637px"><span class="c mr">MR-0688</span><span class="c nm">MOHMMED MAHMOUD REZK</span><span class="c dob">06/11/0982</span><span class="c age">1043 years - 2 months - 5 days</span><span class="c gen">male</span><span class="c occ">others</span><span class="c mar">unmarried</span><span class="c idn">2246029512</span><span class="c ph">0544461381</span><span class="c nat">Egypt</span><span class="cb"></span><span class="c reg">08/01/2026<br>14:57</span><i class="v a"></i><i class="v b"></i><i class="v d"></i></div>
<div class="tr sa" style="top:673px"><span class="c mr">MR-0687</span><span class="c nm">MOHMMED HASSAN ALNASSER</span><span class="c dob">31/12/1982</span><span class="c age">43 years - 11 days</span><span class="c gen">male</span><span class="c occ">others</span><span class="c mar">unmarried</span><span class="c idn">1005308521</span><span class="c ph">0544371131</span><span class="badge">Saudi Arabia</span><span class="cb"></span><span class="c reg">08/01/2026<br>14:55</span><i class="v a"></i><i class="v b"></i><i class="v d"></i></div>
<div class="tr sa" style="top:709px"><span class="c mr">MR-0686</span><span class="c nm">ZAHRAH ABDULLAH</span><span class="c dob">27/02/1989</span><span class="c age">36 years - 10 months - 12 days</span><span class="c gen">female</span><span class="c occ">others</span><span class="c mar">unmarried</span><span class="c idn">1058938430</span><span class="c ph">0546789727</span><span class="badge">Saudi Arabia</span><span class="cb"></span><span class="c reg">07/01/2026<br>20:16</span><i class="v a"></i><i class="v b"></i><i class="v d"></i></div>
<div class="tr sa" style="top:745px"><span class="c mr">MR-0685</span><span class="c nm">HALIMA SALEMH MOHAIMID</span><span class="c dob">28/01/1992</span><span class="c age">33 years - 11 months - 14 days</span><span class="c gen">female</span><span class="c occ">others</span><span class="c mar">unmarried</span><span class="c idn">1074339043</span><span class="c ph">0562788087</span><span class="badge">Saudi Arabia</span><span class="cb"></span><span class="c reg">07/01/2026<br>18:35</span><i class="v a"></i><i class="v b"></i><i class="v d"></i></div>
<div class="tr sa" style="top:781px"><span class="c mr">MR-0684</span><span class="c nm">FATIMA AL-NASSER</span><span class="c dob">14/02/1986</span><span class="c age">39 years - 10 months - 25 days</span><span class="c gen">female</span><span class="c occ">others</span><span class="c mar">unmarried</span><span class="c idn">1027456795</span><span class="c ph">0542887745</span><span class="badge">Saudi Arabia</span><span class="cb"></span><span class="c reg">07/01/2026<br>15:31</span><i class="v a"></i><i class="v b"></i><i class="v d"></i></div>
<div class="tr sa" style="top:817px"><span class="c mr">MR-0683</span><span class="c nm">HAWRA ALARQAN</span><span class="c dob">17/07/1994</span><span class="c age">31 years - 5 months - 25 days</span><span class="c gen">female</span><span class="c occ">others</span><span class="c mar">unmarried</span><span class="c idn">1082185909</span><span class="c ph">0541465551</span><span class="badge">Saudi Arabia</span><span class="cb"></span><span class="c reg">07/01/2026<br>12:59</span><i class="v a"></i><i class="v b"></i><i class="v d"></i></div>
<div class="tr sa" style="top:853px"><span class="c mr">MR-0682</span><span class="c nm">JAWAD AHMED AL MUSSA</span><span class="c dob">21/04/2021</span><span class="c age">4 years - 8 months - 20 days</span><span class="c gen">male</span><span class="c occ">others</span><span class="c mar">unmarried</span><span class="c idn">1201110929</span><span class="c ph">0551928451</span><span class="badge">Saudi Arabia</span><span class="cb"></span><span class="c reg">05/01/2026<br>21:26</span><i class="v a"></i><i class="v b"></i><i class="v d"></i></div>
<div class="tr sa" style="top:889px"><span class="c mr">MR-0681</span><span class="c nm">HUSSAIN ALTALALIWAH</span><span class="c dob">08/09/1991</span><span class="c age">34 years - 4 months - 3 days</span><span class="c gen">male</span><span class="c occ">unknown</span><span class="c mar">Married</span><span class="c idn">1073325431</span><span class="c ph">0557479580</span><span class="badge">Saudi Arabia</span><span class="cb"></span><span class="c reg">05/01/2026<br>17:45</span><i class="v a"></i><i class="v b"></i><i class="v d"></i></div>
<div class="tr sa" style="top:925px"><span class="c mr">MR-0680</span><span class="c nm">MANAR AL ZAWAD</span><span class="c dob">12/01/2001</span><span class="c age">24 years - 11 months - 30 days</span><span class="c gen">female</span><span class="c occ">others</span><span class="c mar">unmarried</span><span class="c idn">1110370085</span><span class="c ph">0548894793</span><span class="badge">Saudi Arabia</span><span class="cb"></span><span class="c reg">04/01/2026<br>20:27</span><i class="v a"></i><i class="v b"></i><i class="v d"></i></div>
<div class="tr sa" style="top:961px"><span class="c mr">MR-0679</span><span class="c nm">ALI ALMARHUN</span><span class="c dob">08/09/2014</span><span class="c age">11 years - 4 months - 3 days</span><span class="c gen">female</span><span class="c occ">others</span><span class="c mar">unmarried</span><span class="c idn">1170948630</span><span class="c ph">0546355502</span><span class="badge">Saudi Arabia</span><span class="cb"></span><span class="c reg">04/01/2026<br>13:29</span><i class="v a"></i><i class="v b"></i><i class="v d"></i></div>
<div class="tr sa" style="top:997px"><span class="c mr">MR-0678</span><span class="c nm">HAWRA ALQASSAB</span><span class="c dob">18/12/1992</span><span class="c age">33 years - 24 days</span><span class="c gen">female</span><span class="c occ">others</span><span class="c mar">unmarried</span><span class="c idn">1074709955</span><span class="c ph">0548852287</span><span class="badge">Saudi Arabia</span><span class="cb"></span><span class="c reg">03/01/2026<br>19:04</span><i class="v a"></i><i class="v b"></i><i class="v d"></i></div>
<div class="tr" style="top:1033px"><span class="c mr">MR-0677</span><span class="c nm">LINA HUSSAIN ALAMMASH</span><span class="c dob">28/05/1978</span><span class="c age">47 years - 7 months - 14 days</span><span class="c gen">female</span><span class="c occ">others</span><span class="c mar">unmarried</span><span class="c idn">2188898536</span><span class="c ph">0598104176</span><span class="c nat">Jordan</span><span class="cb"></span><span class="c reg">03/01/2026<br>14:05</span><i class="v a"></i><i class="v b"></i><i class="v d"></i></div>
<div class="tr sa" style="top:1069px"><span class="c mr">MR-0676</span><span class="c nm">SAJA BASHIR</span><span class="c dob">01/07/2007</span><span class="c age">18 years - 6 months - 10 days</span><span class="c gen">female</span><span class="c occ">others</span><span class="c mar">unmarried</span><span class="c idn">1138808652</span><span class="c ph">0566650613</span><span class="badge">Saudi Arabia</span><span class="cb"></span><span class="c reg">01/01/2026<br>22:09</span><i class="v a"></i><i class="v b"></i><i class="v d"></i></div>
<div class="tr sa" style="top:1105px"><span class="c mr">MR-0675</span><span class="c nm">SHOOG AL MARZOOQ</span><span class="c dob">13/06/2008</span><span class="c age">17 years - 6 months - 28 days</span><span class="c gen">female</span><span class="c occ">others</span><span class="c mar">unmarried</span><span class="c idn">1142774585</span><span class="c ph">0573159040</span><span class="badge">Saudi Arabia</span><span class="cb"></span><span class="c reg">01/01/2026<br>19:57</span><i class="v a"></i><i class="v b"></i><i class="v d"></i></div>
<div class="tr sa" style="top:1141px"><span class="c mr">MR-0674</span><span class="c nm">ZAINAB ABDULHADI</span><span class="c dob">04/12/2016</span><span class="c age">9 years - 1 months - 7 days</span><span class="c gen">female</span><span class="c occ">others</span><span class="c mar">unmarried</span><span class="c idn">1180719153</span><span class="c ph">0546355502</span><span class="badge">Saudi Arabia</span><span class="cb"></span><span class="c reg">01/01/2026<br>18:21</span><i class="v a"></i><i class="v b"></i><i class="v d"></i></div>
<div class="tr" style="top:1177px"><span class="c mr">MR-0673</span><span class="c nm">SALEM ALI MOHAMMED</span><span class="c dob">01/02/1976</span><span class="c age">49 years - 11 months - 10 days</span><span class="c gen">male</span><span class="c occ">others</span><span class="c mar">unmarried</span><span class="c idn">2618306910</span><span class="c ph">0535805133</span><span class="c nat">Yemen</span><span class="cb"></span><span class="c reg">01/01/2026<br>18:21</span><i class="v a"></i><i class="v b"></i><i class="v d"></i></div>
<div class="tr sa" style="top:1213px"><span class="c mr">MR-0672</span><span class="c nm">SAKINA AMIN</span><span class="c dob">04/03/2004</span><span class="c age">21 years - 10 months - 7 days</span><span class="c gen">female</span><span class="c occ">others</span><span class="c mar">unmarried</span><span class="c idn">1123896365</span><span class="c ph">0568227199</span><span class="badge">Saudi Arabia</span><span class="cb"></span><span class="c reg">01/01/2026<br>16:41</span><i class="v a"></i><i class="v b"></i><i class="v d"></i></div>
<div class="tr sa" style="top:1249px"><span class="c mr">MR-0671</span><span class="c nm">HUSSAIN ALI AL GHARRASH</span><span class="c dob">17/01/1991</span><span class="c age">34 years - 11 months - 25 days</span><span class="c gen">male</span><span class="c occ">others</span><span class="c mar">unmarried</span><span class="c idn">1070438773</span><span class="c ph">0580060666</span><span class="badge">Saudi Arabia</span><span class="cb"></span><span class="c reg">01/01/2026<br>16:01</span><i class="v a"></i><i class="v b"></i><i class="v d"></i></div>
<div class="tr sa" style="top:1285px"><span class="c mr">MR-0670</span><span class="c nm">ZAHRA MOHAMMED AL MUHANNA</span><span class="c dob">15/07/1989</span><span class="c age">36 years - 5 months - 27 days</span><span class="c gen">female</span><span class="c occ">others</span><span class="c mar">Married</span><span class="c idn">1052133277</span><span class="c ph">0542060580</span><span class="badge">Saudi Arabia</span><span class="cb"></span><span class="c reg">01/01/2026<br>15:27</span><i class="v a"></i><i class="v b"></i><i class="v d"></i></div>
<div class="tr sa" style="top:1321px"><span class="c mr">MR-0669</span><span class="c nm">FAHAD AL HUMAIDI AL KHALDI</span><span class="c dob">08/09/1986</span><span class="c age">39 years - 4 months - 3 days</span><span class="c gen">male</span><span class="c occ">others</span><span class="c mar">unmarried</span><span class="c idn">1045486394</span><span class="c ph">0565762237</span><span class="badge">Saudi Arabia</span><span class="cb"></span><span class="c reg">01/01/2026<br>15:05</span><i class="v a"></i><i class="v b"></i><i class="v d"></i></div>
<div class="tr sa" style="top:1357px"><span class="c mr">MR-0668</span><span class="c nm">OTHMAN AL TURKI</span><span class="c dob">10/10/1965</span><span class="c age">60 years - 3 months - 1 days</span><span class="c gen">male</span><span class="c occ">others</span><span class="c mar">Married</span><span class="c idn">1010269163</span><span class="c ph">0569507024</span><span class="badge">Saudi Arabia</span><span class="cb"></span><span class="c reg">01/01/2026<br>08:59</span><i class="v a"></i><i class="v b"></i><i class="v d"></i></div>
<div class="tr sa" style="top:1393px"><span class="c mr">MR-0667</span><span class="c nm">FATIMAH MOHMMED ALDHAI</span><span class="c dob">07/04/2005</span><span class="c age">20 years - 9 months - 4 days</span><span class="c gen">female</span><span class="c occ">others</span><span class="c mar">unmarried</span><span class="c idn">1130379538</span><span class="c ph">0591062289</span><span class="badge">Saudi Arabia</span><span class="cb"></span><span class="c reg">31/12/2025<br>21:12</span><i class="v a"></i><i class="v b"></i><i class="v d"></i></div>
<div class="tr sa last" style="top:1429px"><i class="v a"></i><i class="v b"></i><i class="v d"></i></div>
<i class="vl" style="left:370px"></i><i class="vl" style="left:572px"></i><i class="vl" style="left:645px"></i><i class="vl" style="left:816px"></i><i class="vl" style="left:936px"></i><i class="vl" style="left:1056px"></i><i class="vl" style="left:1175px"></i><i class="vl" style="left:1295px"></i><i class="vl" style="left:1415px"></i><i class="vl" style="left:1488px"></i><i class="vl" style="left:1552px"></i><i class="vl" style="left:1650px"></i>
</div>
<div id="vscroll"></div>
<div id="hbar"></div>
<div id="fab"><svg viewBox="0 0 24 24" width="22" height="22"><path fill="#fff" d="M19 13.200h-5.800V19h-2.400v-5.800H5v-2.400h5.800V5h2.400v5.800H19z"/></svg></div>
</div>
</body></html>
